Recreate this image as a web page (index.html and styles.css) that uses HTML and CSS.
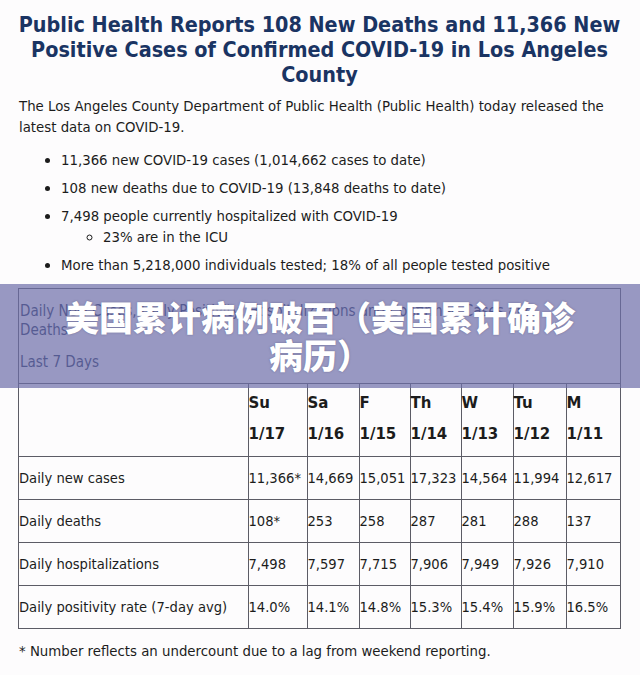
FILE: index.html
```html
<!DOCTYPE html>
<html lang="en">
<head>
<meta charset="utf-8">
<title>Public Health Reports</title>
<link rel="stylesheet" href="styles.css">
</head>
<body>
<div class="page">
  <h1 class="title">Public Health Reports 108 New Deaths and 11,366 New Positive Cases of Confirmed COVID-19 in Los Angeles County</h1>
  <p class="lead">The Los Angeles County Department of Public Health (Public Health) today released the latest data on COVID-19.</p>
  <ul class="facts">
    <li>11,366 new COVID-19 cases (1,014,662 cases to date)</li>
    <li>108 new deaths due to COVID-19 (13,848 deaths to date)</li>
    <li>7,498 people currently hospitalized with COVID-19
      <ul class="sub">
        <li>23% are in the ICU</li>
      </ul>
    </li>
    <li>More than 5,218,000 individuals tested; 18% of all people tested positive</li>
  </ul>

  <div class="databox">
    <div class="caption">
      <div class="cap-title">Daily New Cases, Daily Positivity, Hospitalizations and Confirmed Cases and<br>Deaths</div>
      <div class="cap-sub">Last 7 Days</div>
    </div>
    <table class="grid">
      <colgroup>
        <col class="c-label"><col class="c-1"><col class="c-2"><col class="c-3"><col class="c-4"><col class="c-5"><col class="c-6"><col class="c-7">
      </colgroup>
      <thead>
        <tr>
          <th></th>
          <th>Su<br>1/17</th>
          <th>Sa<br>1/16</th>
          <th>F<br>1/15</th>
          <th>Th<br>1/14</th>
          <th>W<br>1/13</th>
          <th>Tu<br>1/12</th>
          <th>M<br>1/11</th>
        </tr>
      </thead>
      <tbody>
        <tr><td>Daily new cases</td><td>11,366*</td><td>14,669</td><td>15,051</td><td>17,323</td><td>14,564</td><td>11,994</td><td>12,617</td></tr>
        <tr><td>Daily deaths</td><td>108*</td><td>253</td><td>258</td><td>287</td><td>281</td><td>288</td><td>137</td></tr>
        <tr><td>Daily hospitalizations</td><td>7,498</td><td>7,597</td><td>7,715</td><td>7,906</td><td>7,949</td><td>7,926</td><td>7,910</td></tr>
        <tr><td>Daily positivity rate (7-day avg)</td><td>14.0%</td><td>14.1%</td><td>14.8%</td><td>15.3%</td><td>15.4%</td><td>15.9%</td><td>16.5%</td></tr>
      </tbody>
    </table>
  </div>
  <p class="note">* Number reflects an undercount due to a lag from weekend reporting.</p>
</div>

<div class="banner">
  <div class="banner-text">美国累计病例破百（美国累计确诊<br>病历）</div>
</div>
</body>
</html>
```

FILE: styles.css
```css
html, body {
  margin: 0;
  padding: 0;
}

body {
  background: #fdfcfd;
  color: #1c1c1c;
  font-family: "DejaVu Sans Condensed", "DejaVu Sans", sans-serif;
  font-stretch: condensed;
  font-size: 14.8px;
  width: 640px;
  height: 675px;
  overflow: hidden;
  position: relative;
}

.page {
  padding: 0 19px 0 18px;
}

.title {
  margin: 12px 0 0;
  font-size: 21.4px;
  line-height: 25px;
  font-weight: bold;
  text-align: center;
  color: #1a3463;
}

.lead {
  margin: 8px 0 0;
  padding-left: 1px;
  line-height: 21px;
}

.facts {
  margin: 12px 0 0;
  padding-left: 43px;
  list-style: disc;
}

.facts li {
  line-height: 21px;
  margin-bottom: 7px;
}

.facts .sub {
  margin: 0;
  padding-left: 42px;
  list-style: circle;
}

.facts .sub li {
  margin-bottom: 0;
}

.databox {
  margin-top: 13px;
  border: 1px solid #5c5c66;
  border-bottom: none;
}

.caption {
  padding: 13px 1px 11px;
  color: #1f3060;
  font-size: 15px;
}

.cap-title {
  line-height: 19px;
}

.cap-sub {
  margin-top: 13px;
  line-height: 19px;
}

.grid {
  width: 100%;
  border-collapse: collapse;
  table-layout: fixed;
  font-size: 14.6px;
}

.c-label { width: 229px; }
.c-1 { width: 59px; }
.c-2 { width: 52px; }
.c-3 { width: 51px; }
.c-4 { width: 51px; }
.c-5 { width: 52px; }
.c-6 { width: 53px; }
.c-7 { width: 54px; }

.grid th,
.grid td {
  border: 1px solid #5c5c66;
  padding: 0;
  text-align: left;
  white-space: nowrap;
}

.grid tr > :first-child { border-left: none; }
.grid tr > :last-child { border-right: none; }

.grid th {
  font-family: "DejaVu Sans", sans-serif;
  font-stretch: normal;
  font-weight: bold;
  font-size: 15px;
  line-height: 31px;
  padding-top: 4px;
  padding-bottom: 6px;
  vertical-align: top;
}

.grid td {
  height: 42px;
  line-height: 20px;
  vertical-align: middle;
}

.note {
  margin: 11px 0 0;
  padding-left: 1px;
  line-height: 21px;
}

.banner {
  position: absolute;
  left: 0;
  top: 284px;
  width: 640px;
  height: 104px;
  background: rgba(108, 110, 168, 0.7);
  display: flex;
  align-items: center;
  justify-content: center;
}

.banner-text {
  color: #ffffff;
  font-family: "Noto Sans CJK SC", sans-serif;
  font-weight: 900;
  font-size: 34px;
  line-height: 38px;
  text-align: center;
  text-shadow: 0 0 2px rgba(60, 60, 100, 0.5);
}
```
